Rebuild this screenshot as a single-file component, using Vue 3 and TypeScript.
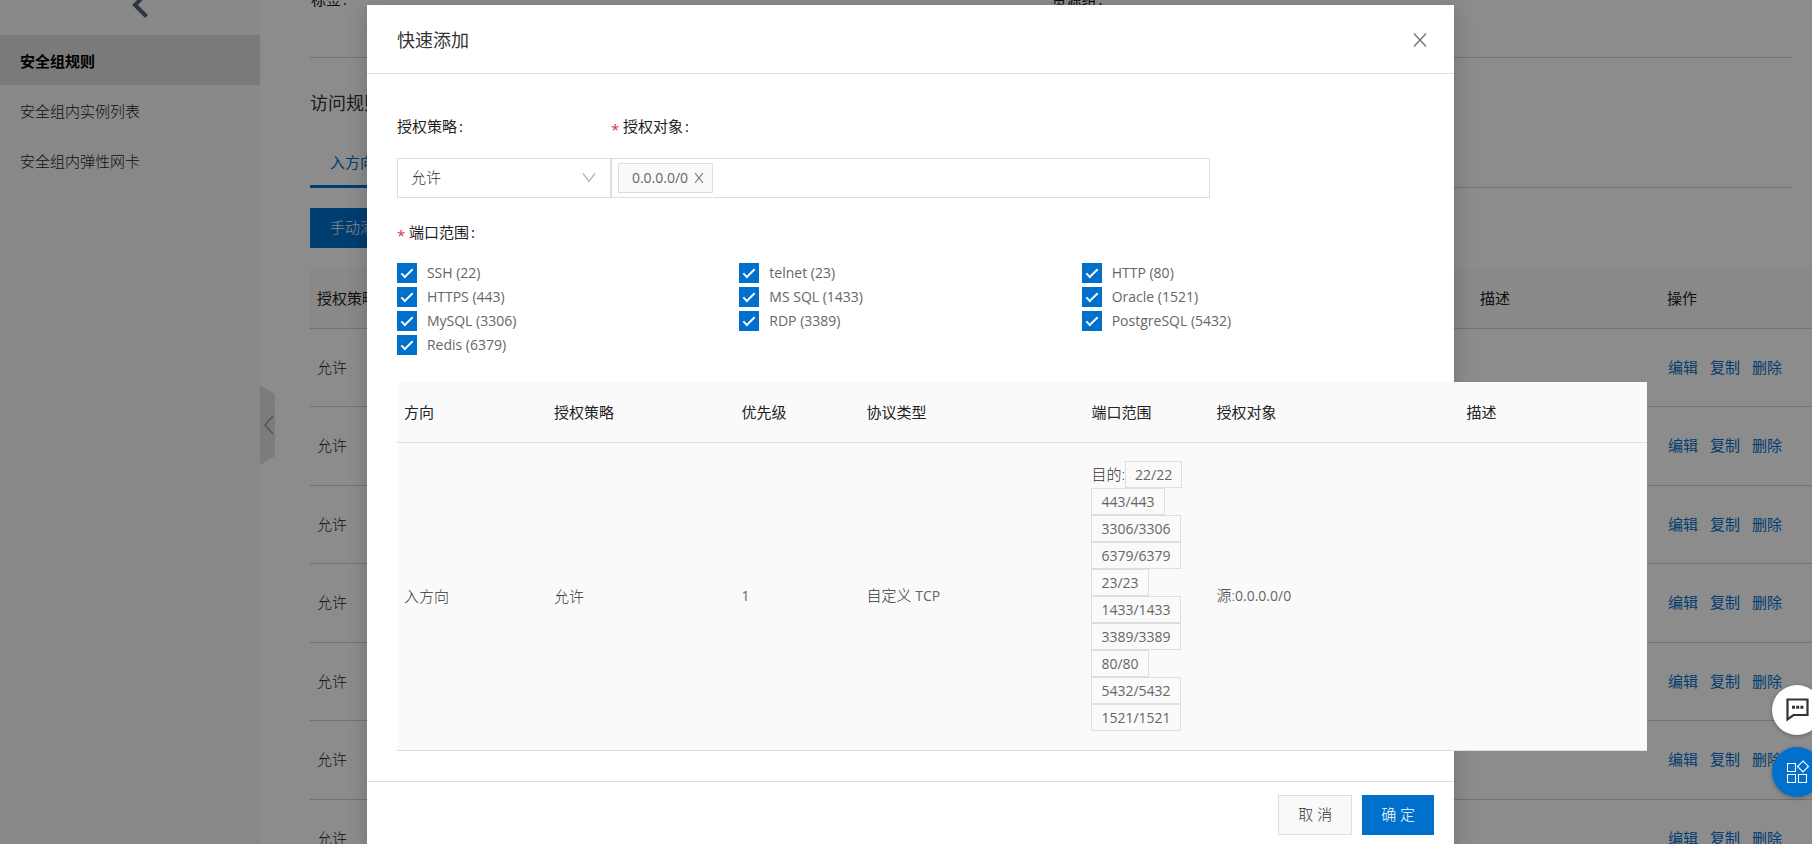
<script setup lang="ts">
import { ref } from 'vue'

interface PortOption {
  name: string
  port: number
  checked: boolean
}

const menu = ['安全组规则', '安全组内实例列表', '安全组内弹性网卡']
const ruleCount = 7
const actions = ['编辑', '复制', '删除']

const policy = ref('允许')
const sources = ref(['0.0.0.0/0'])

const ports = ref<PortOption[]>([
  { name: 'SSH', port: 22, checked: true },
  { name: 'telnet', port: 23, checked: true },
  { name: 'HTTP', port: 80, checked: true },
  { name: 'HTTPS', port: 443, checked: true },
  { name: 'MS SQL', port: 1433, checked: true },
  { name: 'Oracle', port: 1521, checked: true },
  { name: 'MySQL', port: 3306, checked: true },
  { name: 'RDP', port: 3389, checked: true },
  { name: 'PostgreSQL', port: 5432, checked: true },
  { name: 'Redis', port: 6379, checked: true },
])

const previewOrder = [22, 443, 3306, 6379, 23, 1433, 3389, 80, 5432, 1521]
const previewHeads = ['方向', '授权策略', '优先级', '协议类型', '端口范围', '授权对象', '描述']

function isChecked(port: number): boolean {
  return ports.value.some((p) => p.port === port && p.checked)
}

function removeSource(value: string): void {
  sources.value = sources.value.filter((s) => s !== value)
}
</script>

<template>
  <div class="shell">
    <div class="page">
      <aside class="sidebar">
        <div class="sidebar-head">
          <button class="back" type="button" aria-label="返回">
            <svg width="18" height="18" viewBox="0 8 18 18">
              <path d="M15.500 1 4 13l11.500 11.500" fill="none" stroke="#566078" stroke-width="4" />
            </svg>
          </button>
        </div>
        <nav class="menu">
          <a v-for="(item, i) in menu" :key="item" href="#" :class="{ active: i === 0 }">{{ item }}</a>
        </nav>
        <button class="handle" type="button" aria-label="收起">
          <svg width="16" height="80" viewBox="0 0 16 80">
            <path d="M0 0 15 9V71L0 80Z" fill="#e2e2e2" />
            <path d="M13 31 5 40l8 9" fill="none" stroke="#999" stroke-width="1.500" />
          </svg>
        </button>
      </aside>

      <main class="main">
        <div class="info">
          <span>标签<i class="colon">:</i></span>
          <span>资源组<i class="colon">:</i></span>
        </div>
        <h2 class="section-title">访问规则</h2>
        <div class="tabs">
          <button class="tab" type="button">入方向</button>
        </div>
        <button class="primary manual" type="button">手动添加</button>
        <table class="rules">
          <thead>
            <tr>
              <th>授权策略</th>
              <th class="col-desc">描述</th>
              <th class="col-ops">操作</th>
            </tr>
          </thead>
          <tbody>
            <tr v-for="n in ruleCount" :key="n">
              <td>允许</td>
              <td></td>
              <td>
                <div class="ops">
                  <a v-for="a in actions" :key="a" href="#">{{ a }}</a>
                </div>
              </td>
            </tr>
          </tbody>
        </table>
      </main>
    </div>

    <div class="mask"></div>

    <div class="overlay">
      <section class="modal" role="dialog" aria-labelledby="modal-title">
        <header class="modal-head">
          <h1 id="modal-title">快速添加</h1>
          <button class="icon-btn" type="button" aria-label="关闭">
            <svg width="14" height="14" viewBox="0 0 14 14">
              <path d="M1 .5 13 13.500M13 .5 1 13.500" fill="none" stroke="#777" stroke-width="1.400" />
            </svg>
          </button>
        </header>

        <div class="modal-body">
          <div class="row">
            <div class="field policy">
              <label for="policy">授权策略<i class="colon">:</i></label>
              <div class="select-wrap">
                <select id="policy" v-model="policy">
                  <option>允许</option>
                  <option>拒绝</option>
                </select>
                <svg class="caret" width="14" height="10" viewBox="0 0 14 10">
                  <path d="M1 .5 7 8.500 13 .5" fill="none" stroke="#b5b5b5" stroke-width="1.300" />
                </svg>
              </div>
            </div>
            <div class="field source">
              <label for="source"><b class="req">*</b>授权对象<i class="colon">:</i></label>
              <div class="tag-input">
                <span v-for="s in sources" :key="s" class="chip">
                  {{ s }}
                  <button class="icon-btn" type="button" aria-label="移除" @click="removeSource(s)">
                    <svg width="10" height="10" viewBox="0 0 10 10">
                      <path d="M1 0 9 10M9 0 1 10" fill="none" stroke="#777" stroke-width="1.100" />
                    </svg>
                  </button>
                </span>
                <input id="source" type="text" />
              </div>
            </div>
          </div>

          <div class="port-label" id="port-label"><b class="req">*</b>端口范围<i class="colon">:</i></div>
          <div class="ports" role="group" aria-labelledby="port-label">
            <label v-for="p in ports" :key="p.port" class="check">
              <input v-model="p.checked" type="checkbox" />
              <span>{{ p.name }} ({{ p.port }})</span>
            </label>
          </div>

          <table class="preview">
            <thead>
              <tr>
                <th v-for="h in previewHeads" :key="h">{{ h }}</th>
              </tr>
            </thead>
            <tbody>
              <tr>
                <td>入方向</td>
                <td>{{ policy }}</td>
                <td><span class="num">1</span></td>
                <td>自定义 <span class="num">TCP</span></td>
                <td class="range">
                  目的:<template v-for="p in previewOrder" :key="p"><span v-if="isChecked(p)" class="port">{{ p }}/{{ p }}</span><wbr /></template>
                </td>
                <td>源:<span class="num">{{ sources.join(',') }}</span></td>
                <td></td>
              </tr>
            </tbody>
          </table>
        </div>

        <footer class="modal-foot">
          <button class="secondary" type="button">取 消</button>
          <button class="primary" type="button">确 定</button>
        </footer>
      </section>
    </div>

    <div class="floats">
      <button class="float chat" type="button" aria-label="咨询">
        <svg width="24" height="24" viewBox="0 0 24 24">
          <path d="M2.500 1.500h20v15.500H8.500l-6 4.300Z" fill="none" stroke="#333" stroke-width="2.200" />
          <path d="M7 7.700h3v3H7zM11.200 7.700h3v3h-3zM15.400 7.700h3v3h-3z" fill="#333" />
        </svg>
      </button>
      <button class="float apps" type="button" aria-label="应用">
        <svg width="24" height="24" viewBox="0 0 24 24">
          <path
            d="M2.500 3.500h8v8h-8zM2.500 14.500h8v8h-8zM13.500 14.500h8v8h-8zM18 1l5.500 5.500L18 12l-5.500-5.500Z"
            fill="none"
            stroke="#fff"
            stroke-width="1.100"
          />
        </svg>
      </button>
    </div>
  </div>
</template>

<style>
body {
  margin: 0;
  overflow: hidden;
}
</style>

<style scoped>
.shell {
  position: relative;
  height: 100vh;
  overflow: hidden;
  font-family: 'Open Sans', 'Noto Sans CJK SC', sans-serif;
  font-weight: 300;
  font-size: 15px;
  line-height: 24px;
  color: #333;
}
.shell *,
.shell *::after {
  box-sizing: border-box;
}
button,
input,
select {
  font: inherit;
  color: inherit;
  margin: 0;
}
button {
  padding: 0;
  border: 0;
  background: none;
  cursor: pointer;
}
a {
  color: #0070cc;
  text-decoration: none;
}
svg {
  display: block;
}
table {
  border-collapse: separate;
  border-spacing: 0;
}
th {
  font-weight: 400;
  text-align: left;
  color: #222;
}
.colon {
  font-style: normal;
  margin-left: 2px;
}

.page {
  display: flex;
  min-height: 100%;
  background: #fff;
}
.sidebar {
  position: relative;
  flex: 0 0 260px;
  background: #f8f8f8;
}
.sidebar-head {
  display: flex;
  justify-content: center;
  align-items: flex-start;
  height: 35px;
  padding-left: 20px;
}
.menu a {
  display: block;
  height: 50px;
  padding: 0 20px;
  line-height: 52px;
  color: #222;
}
.menu a.active {
  background: #dedede;
  color: #000;
  font-weight: 700;
}
.handle {
  position: absolute;
  left: 100%;
  top: 385px;
}

.main {
  flex: 1;
  min-width: 0;
  margin-top: -13px;
  padding: 0 20px 0 50px;
  overflow: hidden;
}
.info {
  display: grid;
  grid-template-columns: 1fr 1fr;
  padding: 0 0 46px 1px;
  border-bottom: 1px solid #d0d0d0;
  color: #111;
  font-weight: 400;
}
.section-title {
  margin: 29px 0 0;
  font-size: 18px;
  line-height: 32px;
  font-weight: 400;
  color: #333;
}
.tabs {
  display: flex;
  margin-top: 18px;
  border-bottom: 1px solid #d0d0d0;
}
.tab {
  height: 51px;
  margin-bottom: -1px;
  padding: 2px 20px 0;
  border-bottom: 3px solid #0070cc;
  color: #0070cc;
  font-weight: 400;
}
.primary,
.secondary {
  height: 40px;
  padding: 0 20px 2px;
}
.primary {
  background: #0070cc;
  color: #fff;
}
.secondary {
  border: 1px solid #dedede;
  background: #f9f9f9;
}
.manual {
  display: block;
  margin: 20px 0;
}
.rules {
  width: calc(100% + 60px);
  table-layout: fixed;
}
.rules th {
  height: 61px;
  padding: 0 7px;
  background: #fafafa;
  border-bottom: 1px solid #d0d0d0;
}
.rules td {
  height: 78px;
  padding: 0 7px 2px;
  border-bottom: 1px solid #d0d0d0;
  color: #222;
}
.rules tr:nth-child(even) td {
  height: 79px;
}
.col-desc {
  width: 187px;
}
.col-ops {
  width: 192px;
}
.ops {
  display: flex;
  gap: 12px;
  padding-left: 1px;
  font-weight: 400;
}

.mask {
  position: absolute;
  inset: 0;
  background: rgba(0, 0, 0, 0.45);
}
.overlay {
  position: absolute;
  inset: 0;
  display: flex;
  justify-content: center;
  align-items: flex-start;
  padding: 5px 0 0 9px;
}
.modal {
  width: 60vw;
  background: #fff;
  box-shadow: 0 4px 20px rgba(0, 0, 0, 0.2);
}
.modal-head {
  display: flex;
  justify-content: space-between;
  align-items: center;
  height: 69px;
  padding: 2px 27px 0 30px;
  border-bottom: 1px solid #dedede;
}
.modal-head h1 {
  margin: 0;
  font-size: 18px;
  font-weight: 400;
  color: #333;
}
.modal-body {
  padding: 32px 30px 30px;
}
.row {
  display: flex;
}
.policy {
  flex: 0 0 calc(100% * 5 / 24);
}
.source {
  flex: 0 0 calc(100% * 14 / 24);
}
.field label,
.port-label {
  display: block;
  line-height: 40px;
  color: #222;
  font-weight: 400;
}
.field label {
  margin-bottom: 12px;
}
.req {
  display: inline-block;
  width: 12px;
  color: #d9304a;
  font-weight: 400;
  line-height: 24px;
  vertical-align: -3px;
}
.select-wrap {
  position: relative;
}
.select-wrap select {
  display: block;
  width: 100%;
  height: 40px;
  padding: 0 30px 2px 13px;
  border: 1px solid #dedede;
  border-radius: 0;
  background: #fff;
  appearance: none;
}
.caret {
  position: absolute;
  right: 15px;
  top: 15px;
  pointer-events: none;
}
.tag-input {
  display: flex;
  align-items: center;
  height: 40px;
  padding: 0 6px;
  border: 1px solid #dedede;
}
.tag-input input {
  flex: 1;
  min-width: 0;
  border: 0;
  outline: 0;
  background: none;
}
.chip {
  display: flex;
  align-items: center;
  gap: 6px;
  height: 30px;
  padding: 0 8px 0 13px;
  border: 1px solid #dedede;
  background: #fafafa;
}
.chip,
.check,
.num,
.port {
  font-size: 14px;
  font-weight: 400;
  color: #666;
}
.port-label {
  margin-top: 14px;
}
.ports {
  display: grid;
  grid-template-columns: repeat(3, 1fr);
  margin-top: 9px;
}
.check {
  display: flex;
  align-items: center;
  gap: 10px;
  height: 24px;
}
.check input {
  position: relative;
  width: 20px;
  height: 20px;
  border: 1px solid #0070cc;
  background: #fff;
  appearance: none;
}
.check input:checked {
  background: #0070cc;
}
.check input:checked::after {
  content: '';
  position: absolute;
  left: 6px;
  top: 2px;
  width: 6px;
  height: 12px;
  border: solid #fff;
  border-width: 0 2px 2px 0;
  transform: rotate(45deg);
}
.preview {
  position: relative;
  width: 1250px;
  margin-top: 25px;
  table-layout: fixed;
  background: #fafafa;
}
.preview th,
.preview td {
  padding: 0 7px;
  border-bottom: 1px solid #dedede;
}
.preview th {
  height: 61px;
}
.preview th:nth-child(1) {
  width: 12%;
}
.preview th:nth-child(2),
.preview th:nth-child(7) {
  width: 15%;
}
.preview th:nth-child(3),
.preview th:nth-child(5) {
  width: 10%;
}
.preview th:nth-child(4) {
  width: 18%;
}
.preview th:nth-child(6) {
  width: 20%;
}
.preview td {
  padding-bottom: 2px;
}
.preview td.range {
  padding: 18px 7px 19px;
  line-height: 27px;
}
.port {
  display: inline-block;
  height: 27px;
  padding: 0 9px;
  border: 1px solid #dedede;
  line-height: 26px;
  vertical-align: top;
}
.modal-foot {
  display: flex;
  justify-content: flex-end;
  gap: 10px;
  padding: 13px 20px 14px;
  border-top: 1px solid #dedede;
}
.modal-foot button {
  padding: 0 19px 2px;
}

.floats {
  position: absolute;
  right: -10px;
  bottom: 47px;
  display: flex;
  flex-direction: column;
  gap: 12px;
}
.float {
  display: flex;
  justify-content: center;
  align-items: center;
  width: 50px;
  height: 50px;
  border-radius: 50%;
  box-shadow: 0 1px 4px rgba(0, 0, 0, 0.3);
}
.chat {
  background: #fff;
}
.apps {
  background: #0070cc;
}
</style>
